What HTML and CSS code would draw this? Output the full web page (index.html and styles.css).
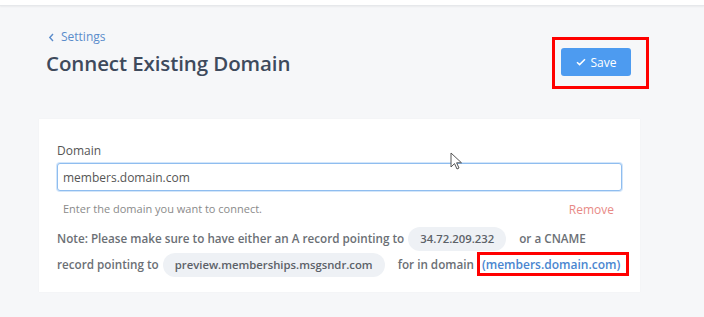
FILE: index.html
```html
<!DOCTYPE html>
<html lang="en">
<head>
  <meta charset="UTF-8" />
  <title>Connect Existing Domain</title>
  <link rel="stylesheet" href="styles.css">
</head>
<body>

  <div class="topbar"></div>

  <div class="page">
    <div class="page-head">
      <div>
        <a class="back" href="#">
          <svg width="7" height="9" viewBox="0 0 7 9"><path d="M5 1 L1.8 4.5 L5 8" fill="none" stroke="currentColor" stroke-width="1.4"/></svg>
          Settings
        </a>
        <h1>Connect Existing Domain</h1>
      </div>
      <div class="mark">
        <button class="btn-save">
          <svg width="10" height="8" viewBox="0 0 10 8"><path d="M1 4.2 L3.6 6.6 L9 1.2" fill="none" stroke="#fff" stroke-width="1.5"/></svg>
          Save
        </button>
      </div>
    </div>

    <div class="card">
      <label class="field-label">Domain</label>
      <div class="input-wrap">
        <input class="input" type="text" value="members.domain.com" />
        <svg class="cursor" width="13" height="19" viewBox="0 0 13 19"><path d="M1 1 L1 15 L4.5 11.6 L7 17 L9 16 L6.6 10.8 L11.5 10.8 Z" fill="#fff" stroke="#555" stroke-width="1"/></svg>
      </div>
      <div class="field-help">
        <span>Enter the domain you want to connect.</span>
        <a class="remove" href="#">Remove</a>
      </div>
      <p class="note">
        Note: Please make sure to have either an A record pointing to
        <span class="pill">34.72.209.232</span>
        or a CNAME <span class="nowrap">record pointing to</span>
        <span class="pill">preview.memberships.msgsndr.com</span>
        for in domain <span class="mark-inline"><a href="#">(members.domain.com)</a></span>
      </p>
    </div>
  </div>

</body>
</html>
```

FILE: styles.css
```css
body {
  margin: 0;
  background: #f6f7f9;
  font-family: 'Open Sans', 'Noto Sans', sans-serif;
  color: #4a5568;
  height: 317px;
  overflow: hidden;
}

.topbar {
  height: 5px;
  background: #fff;
  border-bottom: 1px solid #e6e8eb;
  box-shadow: 0 1px 2px rgba(0, 0, 0, 0.05);
}

.page {
  padding: 23px 55px 0 39px;
}

.page-head {
  display: flex;
  justify-content: space-between;
  align-items: flex-start;
  padding-left: 7px;
}

.back {
  display: flex;
  align-items: center;
  gap: 6px;
  color: #5b8ccb;
  font-size: 12px;
  text-decoration: none;
  padding-left: 2px;
  line-height: 16px;
}

h1 {
  margin: 4px 0 0;
  font-size: 20.5px;
  font-weight: 600;
  color: #3e4a5c;
  letter-spacing: -0.1px;
}

.mark {
  margin-top: 8px;
  border: 3px solid #f00;
  padding: 8px 15px 10px 6px;
}

.btn-save {
  display: flex;
  align-items: center;
  gap: 5px;
  height: 28px;
  width: 70px;
  justify-content: center;
  background: #4d9bf0;
  border: none;
  border-radius: 3px;
  color: #fff;
  font-family: inherit;
  font-size: 12px;
  padding: 0;
}

.card {
  margin-top: 30px;
  background: #fff;
  width: 601px;
  box-sizing: border-box;
  padding: 23px 6px 14px 18px;
  box-shadow: 0 0 1px rgba(0, 0, 0, 0.06);
}

.field-label {
  display: block;
  font-size: 12px;
  color: #555;
  margin-bottom: 4px;
}

.input-wrap {
  position: relative;
}

.input {
  display: block;
  width: 565px;
  height: 28px;
  box-sizing: border-box;
  border: 1px solid #8fbdef;
  border-radius: 3px;
  box-shadow: 0 0 0 1px #d3e6fa;
  padding: 0 5px;
  font-family: inherit;
  font-size: 12px;
  color: #555;
  outline: none;
}

.cursor {
  position: absolute;
  left: 393px;
  top: -11px;
}

.field-help {
  display: flex;
  justify-content: space-between;
  width: 551px;
  padding-left: 6px;
  margin-top: 10px;
  font-size: 11px;
  color: #8a8a8a;
}

.remove {
  color: #e88a86;
  text-decoration: none;
  font-size: 12px;
}

.note {
  margin: 7px 0 0;
  font-size: 11.7px;
  font-weight: 600;
  color: #6b6f75;
  line-height: 26px;
}

.nowrap {
  white-space: nowrap;
}

.pill {
  display: inline-block;
  background: #eef1f5;
  color: #5c6168;
  font-size: 11.3px;
  border-radius: 12px;
  padding: 0 12px;
  margin: 0 10px 0 1px;
  line-height: 24px;
}

.mark-inline {
  border: 3px solid #f00;
  padding: 1px 6px 1px 2px;
}

.mark-inline a {
  color: #4a86d0;
  font-size: 12px;
  text-decoration: none;
}
```
